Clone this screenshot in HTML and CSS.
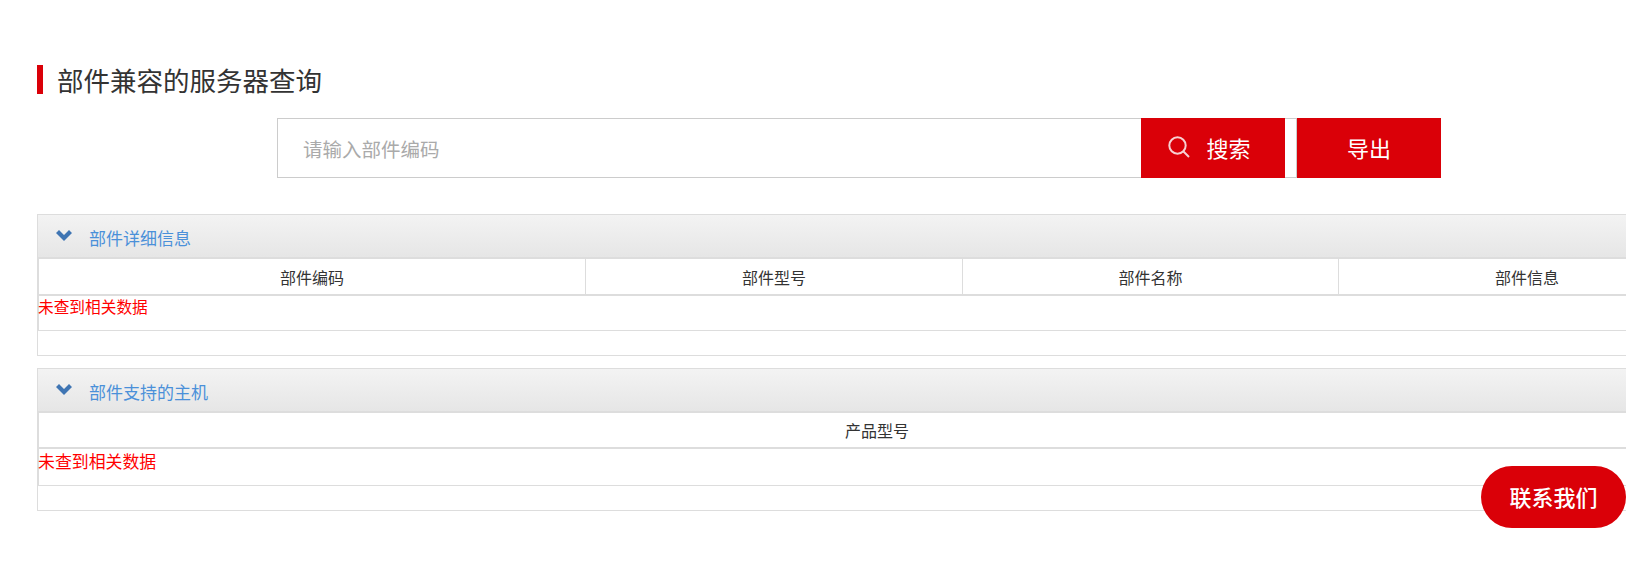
FILE: index.html
```html
<!DOCTYPE html>
<html lang="zh-CN">
<head>
<meta charset="utf-8">
<title>部件兼容的服务器查询</title>
<link rel="stylesheet" href="styles.css">
</head>
<body>
<main class="page">
  <h1 class="title">部件兼容的服务器查询</h1>
  <div class="search-row">
    <div class="search-box">
      <input class="search-input" type="text" placeholder="请输入部件编码">
      <button class="btn btn-search" type="button">
        <svg class="search-icon" viewBox="0 0 22 22" width="22" height="22" aria-hidden="true"><circle cx="9.5" cy="9.5" r="8.2" fill="none" stroke="#f7d0d2" stroke-width="2"/><path d="M15.5 15.5L21 21" fill="none" stroke="#f7d0d2" stroke-width="2"/></svg>
        <span>搜索</span>
      </button>
    </div>
    <button class="btn btn-export" type="button">导出</button>
  </div>

  <section class="panel panel-first">
    <header class="panel-head">
      <svg class="chevron" viewBox="0 0 16 11" width="16" height="11" aria-hidden="true"><path d="M0 3L3 0L8 5L13 0L16 3L8 11Z" fill="#3f75b3"/></svg>
      <span class="panel-title">部件详细信息</span>
    </header>
    <table class="grid">
      <colgroup><col class="c1"><col class="c2"><col class="c3"><col class="c4"></colgroup>
      <thead><tr><th>部件编码</th><th>部件型号</th><th>部件名称</th><th>部件信息</th></tr></thead>
      <tbody><tr><td colspan="4" class="empty">未查到相关数据</td></tr></tbody>
    </table>
    <div class="panel-foot"></div>
  </section>

  <section class="panel panel-second">
    <header class="panel-head">
      <svg class="chevron" viewBox="0 0 16 11" width="16" height="11" aria-hidden="true"><path d="M0 3L3 0L8 5L13 0L16 3L8 11Z" fill="#3f75b3"/></svg>
      <span class="panel-title">部件支持的主机</span>
    </header>
    <table class="grid">
      <thead><tr><th>产品型号</th></tr></thead>
      <tbody><tr><td class="empty">未查到相关数据</td></tr></tbody>
    </table>
    <div class="panel-foot"></div>
  </section>
</main>
<a class="contact" href="#">联系我们</a>
</body>
</html>
```
FILE: styles.css
```css
* { box-sizing: border-box; }
html, body { margin: 0; height: 100%; overflow: hidden; background: #fff; }
body { font-family: "Noto Sans CJK SC", "Liberation Sans", sans-serif; color: #333; }
.page { width: 1716px; padding: 65px 0 0 37px; }
.title {
  margin: 0;
  height: 29px;
  border-left: 6px solid #da0008;
  padding-left: 14px;
  font-size: 26.5px;
  font-weight: 400;
  line-height: 29px;
  color: #333;
}
.search-row { display: flex; margin: 24px 0 0 240px; }
.search-box {
  display: flex;
  width: 1020px;
  height: 60px;
  border: 1px solid #ccc;
  padding-right: 11px;
}
.search-input {
  flex: 1;
  min-width: 0;
  border: 0;
  outline: 0;
  padding: 0 0 0 25px;
  font: 19.5px "Noto Sans CJK SC", "Liberation Sans", sans-serif;
  background: transparent;
}
.search-input::placeholder { color: #aaa; opacity: 1; }
.btn {
  display: flex;
  flex: none;
  align-items: center;
  justify-content: center;
  width: 144px;
  height: 60px;
  border: 0;
  padding: 0 0 2px;
  background: #da0008;
  color: #fff;
  font: 22px "Noto Sans CJK SC", "Liberation Sans", sans-serif;
}
.btn-search { margin-top: -1px; gap: 16px; padding: 0 7px 3px 0; }
.panel { width: 1679px; border: 1px solid #ddd; }
.panel-first { margin-top: 36px; }
.panel-second { margin-top: 12px; }
.panel-head {
  display: flex;
  align-items: center;
  height: 44px;
  padding-left: 18px;
  border-bottom: 2px solid #ddd;
  background: linear-gradient(#f3f3f3, #e6e6e6);
}
.chevron { flex: none; margin-bottom: 2px; }
.panel-title { margin-left: 17px; padding-top: 3px; font-size: 17px; line-height: 24px; color: #4a90d9; }
.grid { width: 100%; border-collapse: separate; border-spacing: 0; table-layout: fixed; border-left: 1px solid #ddd; }
.c1 { width: 546px; }
.c2 { width: 377px; }
.c3 { width: 376px; }
.grid th {
  height: 37px;
  padding: 0;
  border-bottom: 2px solid #ddd;
  border-left: 1px solid #ddd;
  font-size: 16px;
  font-weight: 400;
  color: #333;
}
.grid th:first-child { border-left: 0; }
.empty {
  height: 35px;
  padding: 0;
  border-bottom: 1px solid #ddd;
  color: #f00;
  vertical-align: top;
  text-indent: -1px;
  line-height: 22px;
  font-size: 15.7px;
}
.panel-foot { height: 24px; }
.panel-second .grid th { height: 36px; }
.panel-second .empty { height: 37px; font-size: 16.9px; line-height: 24px; }
.contact {
  position: fixed;
  left: 1481px;
  top: 466px;
  display: flex;
  align-items: center;
  justify-content: center;
  width: 145px;
  height: 62px;
  padding-bottom: 2px;
  border-radius: 31px;
  background: #da0008;
  color: #fff;
  font-size: 22px;
  font-weight: 500;
  text-decoration: none;
}
```
